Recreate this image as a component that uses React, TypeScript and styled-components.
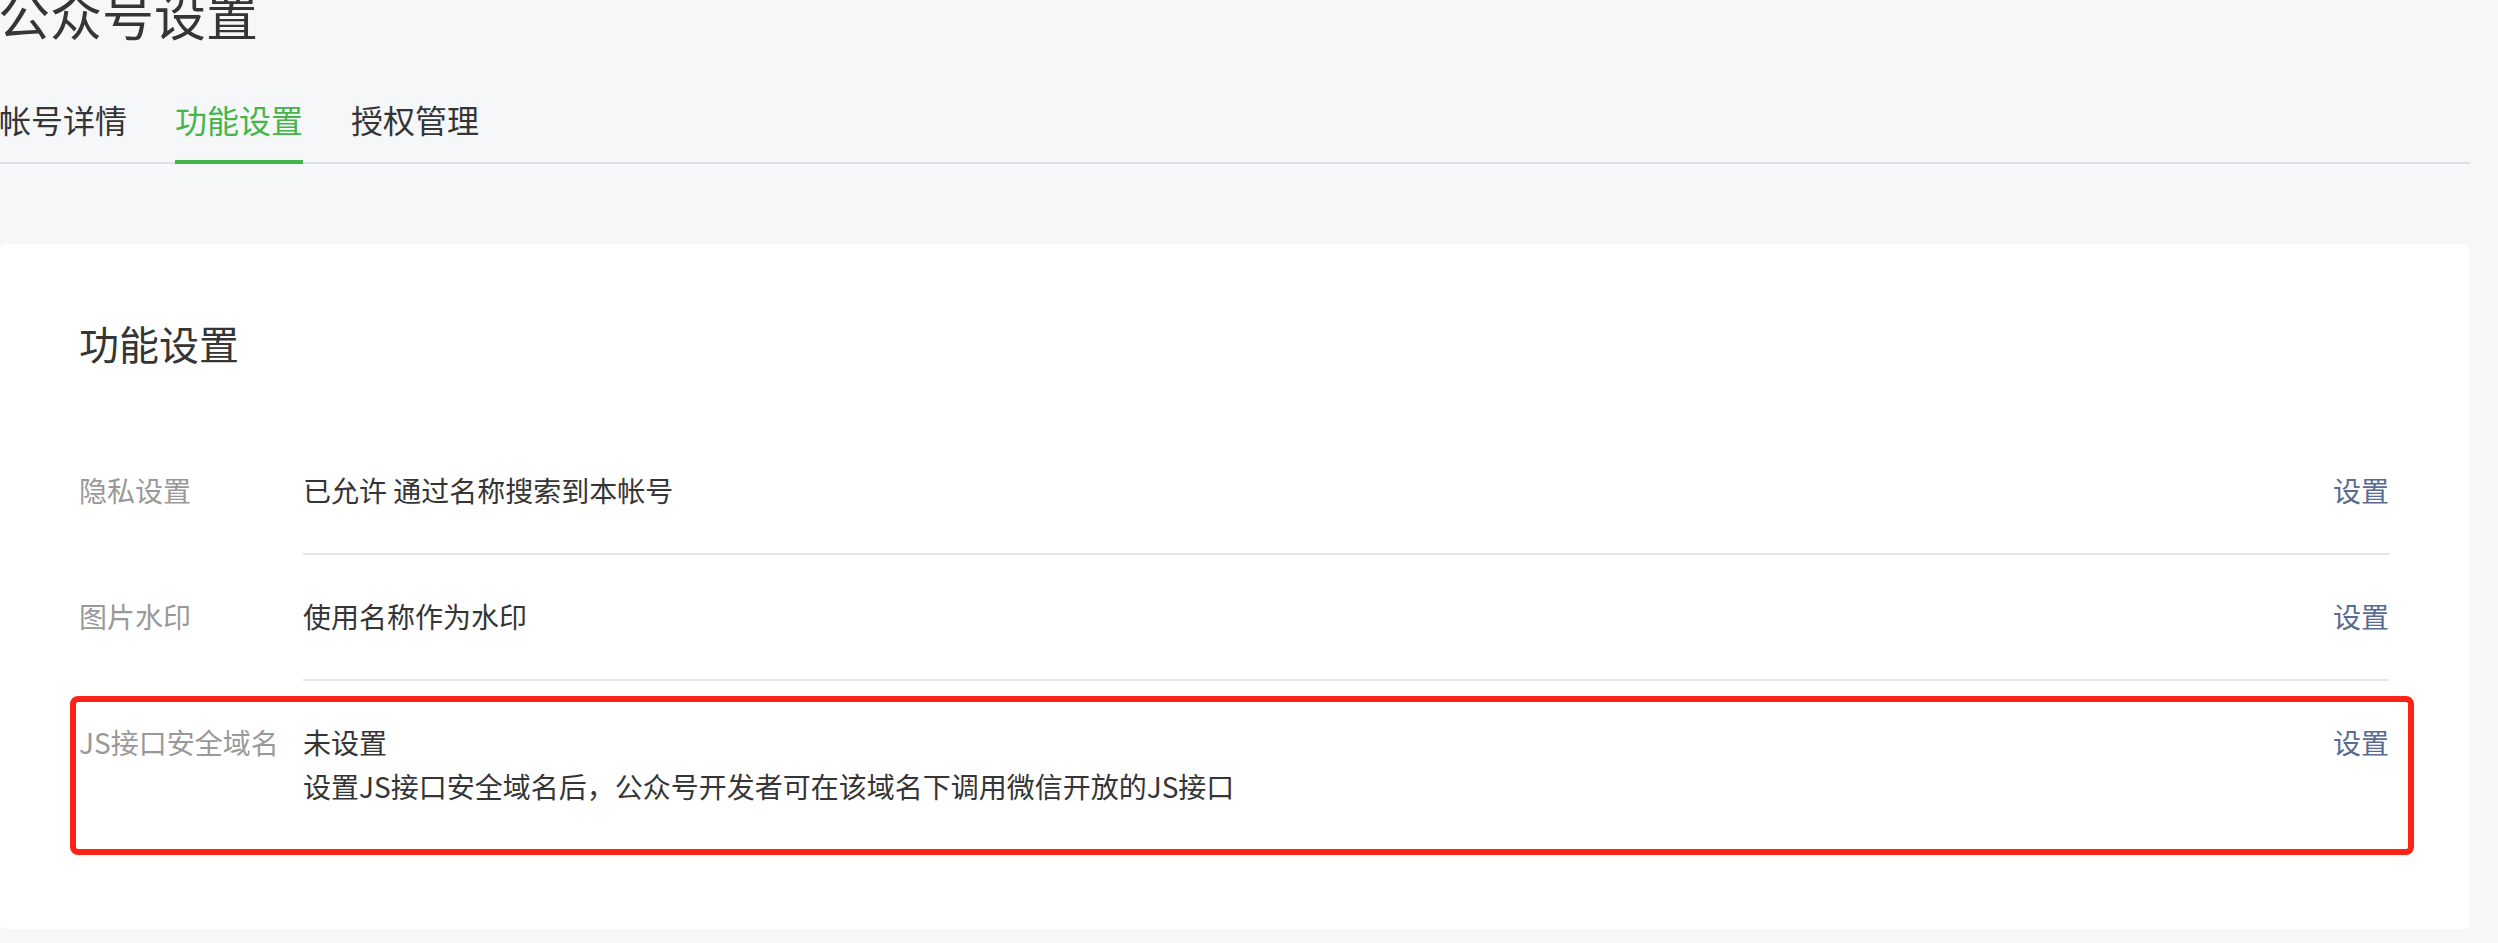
import React from "react";
import styled, { createGlobalStyle } from "styled-components";

const GlobalStyle = createGlobalStyle`
  html, body {
    margin: 0;
    padding: 0;
    background: #f6f7f9;
    font-family: "Noto Sans CJK SC", "Noto Sans", sans-serif;
    color: #353535;
    overflow: hidden;
  }
  * { box-sizing: border-box; }
`;

const Page = styled.div`
  width: 2498px;
  height: 943px;
  padding-right: 28px;
`;

const Header = styled.header`
  margin-left: -2px;
`;

const Title = styled.h1`
  margin: -12px 0 0 0;
  font-size: 52px;
  line-height: 52px;
  font-weight: 400;
  color: #353535;
`;

const TabBar = styled.nav`
  display: flex;
  margin-top: 59px;
  margin-left: 2px;
  border-bottom: 2px solid #e0e1e5;
`;

const TabList = styled.div`
  display: flex;
  gap: 48px;
  margin-left: -1px;
`;

const Tab = styled.a<{ $active?: boolean }>`
  display: block;
  font-size: 32px;
  line-height: 40px;
  padding-bottom: 21px;
  margin-bottom: -2px;
  border-bottom: 4px solid ${(p) => (p.$active ? "#44b549" : "transparent")};
  color: ${(p) => (p.$active ? "#44b549" : "#353535")};
  text-decoration: none;
  cursor: pointer;
`;

const Card = styled.section`
  margin-top: 80px;
  background: #ffffff;
  border-radius: 6px;
  padding: 71px 81px 78px 79px;
`;

const CardTitle = styled.h2`
  margin: 0 0 58px 0;
  font-size: 40px;
  line-height: 56px;
  font-weight: 400;
  color: #353535;
`;

const Row = styled.div`
  position: relative;
  display: flex;
`;

const Label = styled.div`
  width: 224px;
  flex: none;
  font-size: 28px;
  line-height: 44px;
  color: #999999;
  padding: 39px 0 41px 0;
  white-space: nowrap;
`;

const Body = styled.div<{ $last?: boolean }>`
  flex: 1;
  display: flex;
  justify-content: space-between;
  align-items: flex-start;
  padding: 39px 0 41px 0;
  border-bottom: 2px solid ${(p) => (p.$last ? "transparent" : "#e4e8eb")};
`;

const Value = styled.div`
  font-size: 28px;
  line-height: 44px;
  color: #353535;
`;

const Line = styled.div``;

const Link = styled.a`
  font-size: 28px;
  line-height: 44px;
  color: #576b95;
  text-decoration: none;
  cursor: pointer;
  white-space: nowrap;
`;

const Highlight = styled.div`
  position: absolute;
  left: -9px;
  top: 15px;
  right: -25px;
  bottom: -4px;
  border: 6px solid #ff2317;
  border-radius: 8px;
  pointer-events: none;
`;

type Item = { label: string; lines: string[]; highlight?: boolean };

const items: Item[] = [
  { label: "隐私设置", lines: ["已允许 通过名称搜索到本帐号"] },
  { label: "图片水印", lines: ["使用名称作为水印"] },
  {
    label: "JS接口安全域名",
    lines: ["未设置", "设置JS接口安全域名后，公众号开发者可在该域名下调用微信开放的JS接口"],
    highlight: true,
  },
];

export default function App() {
  return (
    <>
      <GlobalStyle />
      <Page>
        <Header>
          <Title>公众号设置</Title>
          <TabBar>
            <TabList>
              <Tab>帐号详情</Tab>
              <Tab $active>功能设置</Tab>
              <Tab>授权管理</Tab>
            </TabList>
          </TabBar>
        </Header>
        <Card>
          <CardTitle>功能设置</CardTitle>
          {items.map((it, i) => (
            <Row key={it.label}>
              <Label>{it.label}</Label>
              <Body $last={i === items.length - 1}>
                <Value>
                  {it.lines.map((l) => (
                    <Line key={l}>{l}</Line>
                  ))}
                </Value>
                <Link>设置</Link>
              </Body>
              {it.highlight && <Highlight />}
            </Row>
          ))}
        </Card>
      </Page>
    </>
  );
}
